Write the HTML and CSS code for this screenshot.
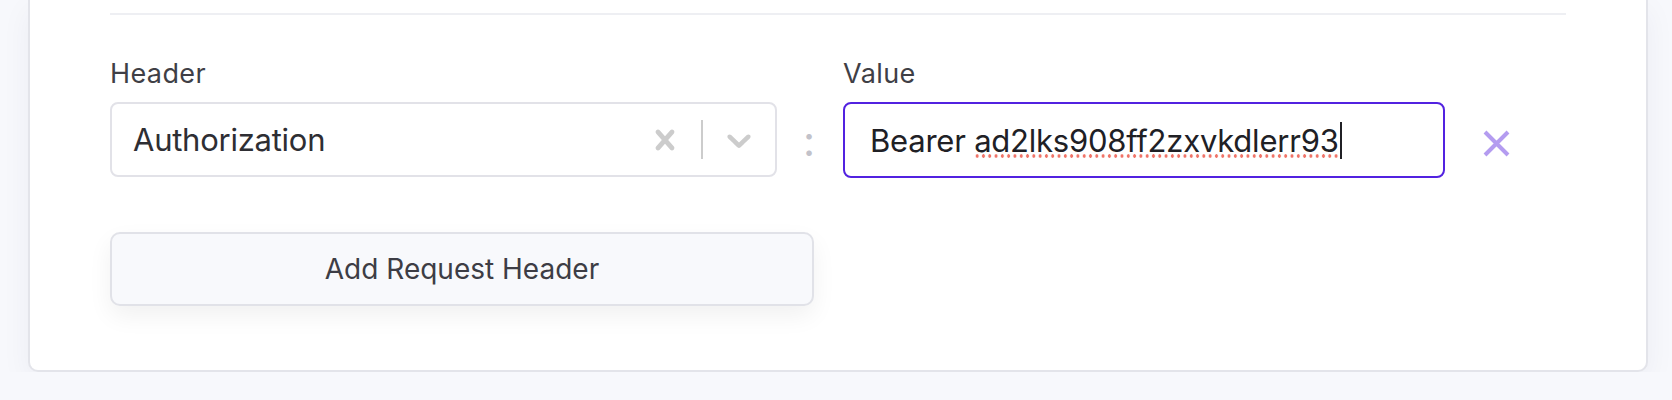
FILE: index.html
```html
<!DOCTYPE html>
<html lang="en">
<head>
    <meta charset="UTF-8">
    <meta name="viewport" content="width=device-width, initial-scale=1.0">
    <title>Request Headers</title>
    <link rel="stylesheet" href="styles.css">
</head>
<body>
    <div class="card">
        <div class="prev-section"></div>

        <div class="headers">
            <div class="header-row">
                <label class="field-label">Header</label>
                <span></span>
                <label class="field-label">Value</label>
                <span></span>

                <div class="select">
                    <div class="select-value">Authorization</div>
                    <div class="select-indicator">
                        <svg width="40" height="40" viewBox="0 0 20 20"><path fill="#cccccc" d="M14.348 14.849c-0.469 0.469-1.229 0.469-1.697 0l-2.651-3.030-2.651 3.029c-0.469 0.469-1.229 0.469-1.697 0-0.469-0.469-0.469-1.229 0-1.697l2.758-3.15-2.759-3.152c-0.469-0.469-0.469-1.228 0-1.697s1.228-0.469 1.697 0l2.652 3.031 2.651-3.031c0.469-0.469 1.228-0.469 1.697 0s0.469 1.229 0 1.697l-2.758 3.152 2.758 3.150c0.469 0.469 0.469 1.229 0 1.698z"/></svg>
                    </div>
                    <span class="select-sep"></span>
                    <div class="select-indicator">
                        <svg width="40" height="40" viewBox="0 0 20 20"><path fill="#cccccc" d="M4.516 7.548c0.436-0.446 1.043-0.481 1.576 0l3.908 3.747 3.908-3.747c0.533-0.481 1.141-0.446 1.574 0 0.436 0.445 0.408 1.197 0 1.615-0.406 0.418-4.695 4.502-4.695 4.502-0.217 0.223-0.502 0.335-0.787 0.335s-0.57-0.112-0.789-0.335c0 0-4.287-4.084-4.695-4.502s-0.436-1.17 0-1.615z"/></svg>
                    </div>
                </div>

                <div class="colon">:</div>

                <div class="text-input focused">
                    <span class="input-text">Bearer <span class="misspelled">ad2lks908ff2zxvkdlerr93</span></span><span class="caret"></span>
                </div>

                <button class="remove-btn" title="Remove">
                    <svg width="27" height="27" viewBox="0 0 27 27"><path d="M2 2L25 25M25 2L2 25" stroke="#b49cf0" stroke-width="4"/></svg>
                </button>
            </div>

            <button class="add-btn">Add Request Header</button>
        </div>
    </div>
</body>
</html>
```

FILE: styles.css
```css
body { margin: 0; background: #f7f8fc; font-family: Inter, "Liberation Sans", sans-serif; color: #3d3d45; }

.card { margin-left: 28px; width: 1620px; box-sizing: border-box; background: #fff; border: 2px solid #e3e4ea; border-top: none; border-radius: 0 0 10px 10px; padding: 0 80px 64px; box-shadow: 0 10px 30px rgba(30, 40, 80, 0.05); }
.prev-section { height: 13px; border-bottom: 2px solid #eeeff3; }

.headers { padding-top: 41px; }
.header-row { display: grid; grid-template-columns: 667px 66px 602px 1fr; row-gap: 10px; align-items: start; }
.field-label { font-size: 27px; line-height: 36px; letter-spacing: 0.4px; color: #3f3f46; }

.select { display: flex; align-items: center; height: 75px; box-sizing: border-box; border: 2px solid #e2e2e8; border-radius: 8px; padding-left: 21px; }
.select-value { flex: 1; font-size: 31px; letter-spacing: -0.25px; color: #2e2e33; }
.select-indicator { display: flex; padding: 16px; }
.select-sep { width: 2px; align-self: stretch; margin: 16px 0; background: #cccccc; }

.colon { align-self: center; text-align: center; font-size: 42px; line-height: 1; color: #c2c2ca; margin: 2px 0 0 -2px; }

.text-input { display: flex; align-items: center; height: 76px; box-sizing: border-box; border: 2px solid #e2e2e8; border-radius: 8px; padding-left: 25px; font-size: 31px; letter-spacing: -0.22px; color: #202025; }
.text-input.focused { border-color: #5222e0; }
.misspelled { background-image: radial-gradient(circle, #f07468 1.5px, transparent 1.9px); background-size: 6.3px 6px; background-repeat: repeat-x; background-position: 0 100%; padding-bottom: 0; }
.caret { display: inline-block; width: 2px; height: 37px; margin-left: 1px; background: #202025; }

.remove-btn { align-self: center; margin: 7px 0 0 38px; width: 27px; height: 27px; padding: 0; border: 0; background: none; cursor: pointer; display: flex; }

.add-btn { display: block; width: 704px; height: 74px; margin-top: 54px; border: 2px solid #e1e2e8; border-radius: 10px; background: #f8f9fc; font-family: Inter, "Liberation Sans", sans-serif; font-size: 28px; color: #3d3d45; box-shadow: 0 10px 24px rgba(0, 0, 0, 0.06); cursor: pointer; }
```
